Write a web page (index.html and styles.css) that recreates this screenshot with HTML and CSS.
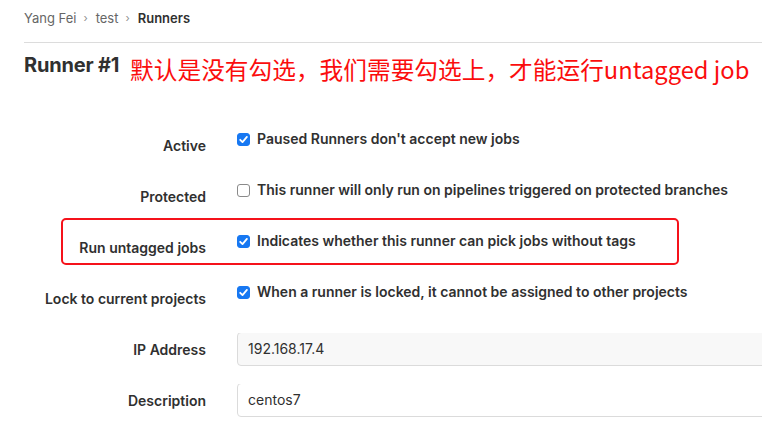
FILE: index.html
```html
<!DOCTYPE html>
<html lang="zh-CN">
<head>
<meta charset="utf-8">
<title>Runner #1</title>
<link rel="stylesheet" href="styles.css">
</head>
<body>
<div class="page">
  <nav class="breadcrumb">
    <span class="crumb">Yang Fei</span>
    <span class="sep">›</span>
    <span class="crumb">test</span>
    <span class="sep">›</span>
    <span class="crumb current">Runners</span>
  </nav>

  <div class="title-row">
    <h1 class="title">Runner #1</h1>
    <span class="note">默认是没有勾选，我们需要勾选上，才能运行untagged job</span>
  </div>

  <form class="form">
    <div class="row">
      <label class="label">Active</label>
      <div class="control check">
        <span class="box checked"><svg viewBox="0 0 13 13" width="13" height="13"><path d="M3.2 6.8 L5.5 9.1 L9.9 3.9" fill="none" stroke="#fff" stroke-width="1.8" stroke-linecap="round" stroke-linejoin="round"/></svg></span>
        <span class="check-text">Paused Runners don't accept new jobs</span>
      </div>
    </div>
    <div class="row">
      <label class="label">Protected</label>
      <div class="control check">
        <span class="box"></span>
        <span class="check-text">This runner will only run on pipelines triggered on protected branches</span>
      </div>
    </div>
    <div class="row marked">
      <div class="highlight"></div>
      <label class="label">Run untagged jobs</label>
      <div class="control check">
        <span class="box checked"><svg viewBox="0 0 13 13" width="13" height="13"><path d="M3.2 6.8 L5.5 9.1 L9.9 3.9" fill="none" stroke="#fff" stroke-width="1.8" stroke-linecap="round" stroke-linejoin="round"/></svg></span>
        <span class="check-text">Indicates whether this runner can pick jobs without tags</span>
      </div>
    </div>
    <div class="row">
      <label class="label">Lock to current projects</label>
      <div class="control check">
        <span class="box checked"><svg viewBox="0 0 13 13" width="13" height="13"><path d="M3.2 6.8 L5.5 9.1 L9.9 3.9" fill="none" stroke="#fff" stroke-width="1.8" stroke-linecap="round" stroke-linejoin="round"/></svg></span>
        <span class="check-text">When a runner is locked, it cannot be assigned to other projects</span>
      </div>
    </div>
    <div class="row">
      <label class="label">IP Address</label>
      <div class="control clip">
        <div class="input disabled">192.168.17.4</div>
      </div>
    </div>
    <div class="row">
      <label class="label">Description</label>
      <div class="control clip">
        <div class="input">centos7</div>
      </div>
    </div>
  </form>
</div>
</body>
</html>
```

FILE: styles.css
```css
html, body {
  margin: 0;
  padding: 0;
  background: #fff;
  overflow: hidden;
}
body {
  font-family: Inter, "Noto Sans", "Liberation Sans", sans-serif;
  color: #303030;
  font-size: 14px;
}
.page {
  padding: 0 0 0 24px;
}
.breadcrumb {
  display: flex;
  align-items: center;
  padding-top: 8px;
  padding-bottom: 14px;
  line-height: 20px;
  font-size: 13px;
  border-bottom: 1px solid #dcdcdc;
}
.crumb {
  color: #666;
}
.crumb.current {
  color: #303030;
  font-weight: 600;
}
.sep {
  color: #8f8f8f;
  font-size: 11px;
  margin: 0 8px 0 7px;
}
.title-row {
  display: flex;
  align-items: flex-start;
  gap: 11px;
  margin-top: 7px;
}
.title {
  margin: 0;
  font-size: 20px;
  line-height: 30px;
  font-weight: 700;
  color: #303030;
  letter-spacing: -0.2px;
}
.note {
  padding-top: 4px;
  font-family: "Noto Sans CJK SC", "Noto Sans", sans-serif;
  font-size: 23.7px;
  line-height: 30px;
  color: #fb0d0d;
  white-space: nowrap;
}
.form {
  margin-top: 45px;
  display: flex;
  flex-direction: column;
  gap: 17px;
}
.row {
  display: flex;
  gap: 31px;
  min-height: 34px;
}
.row.marked {
  position: relative;
}
.highlight {
  position: absolute;
  left: 37px;
  top: -13px;
  width: 618px;
  height: 47px;
  box-sizing: border-box;
  border: 2px solid #f5121b;
  border-radius: 5px;
}
.label {
  width: 182px;
  flex: none;
  text-align: right;
  padding-top: 7px;
  line-height: 20px;
  font-weight: 600;
  color: #303030;
}
.control {
  flex: 1;
  min-width: 0;
}
.control.clip {
  overflow: hidden;
}
.check {
  display: flex;
  align-items: flex-start;
  gap: 7px;
  line-height: 20px;
  white-space: nowrap;
}
.box {
  flex: none;
  width: 13px;
  height: 13px;
  margin-top: 4px;
  box-sizing: border-box;
  border: 1px solid #8a8a8a;
  border-radius: 3px;
  background: #fff;
  display: flex;
}
.box.checked {
  border-color: #1778f2;
  background: #1778f2;
}
.box svg {
  display: block;
  margin: -1px;
}
.check-text {
  font-weight: 600;
  color: #303030;
}
.input {
  width: calc(100% + 12px);
  height: 34px;
  margin-top: -1px;
  box-sizing: border-box;
  border: 1px solid #dbdbdb;
  border-radius: 4px;
  padding: 0 10px;
  line-height: 32px;
  background: #fff;
  color: #303030;
}
.input.disabled {
  background: #f8f8f8;
}
```
